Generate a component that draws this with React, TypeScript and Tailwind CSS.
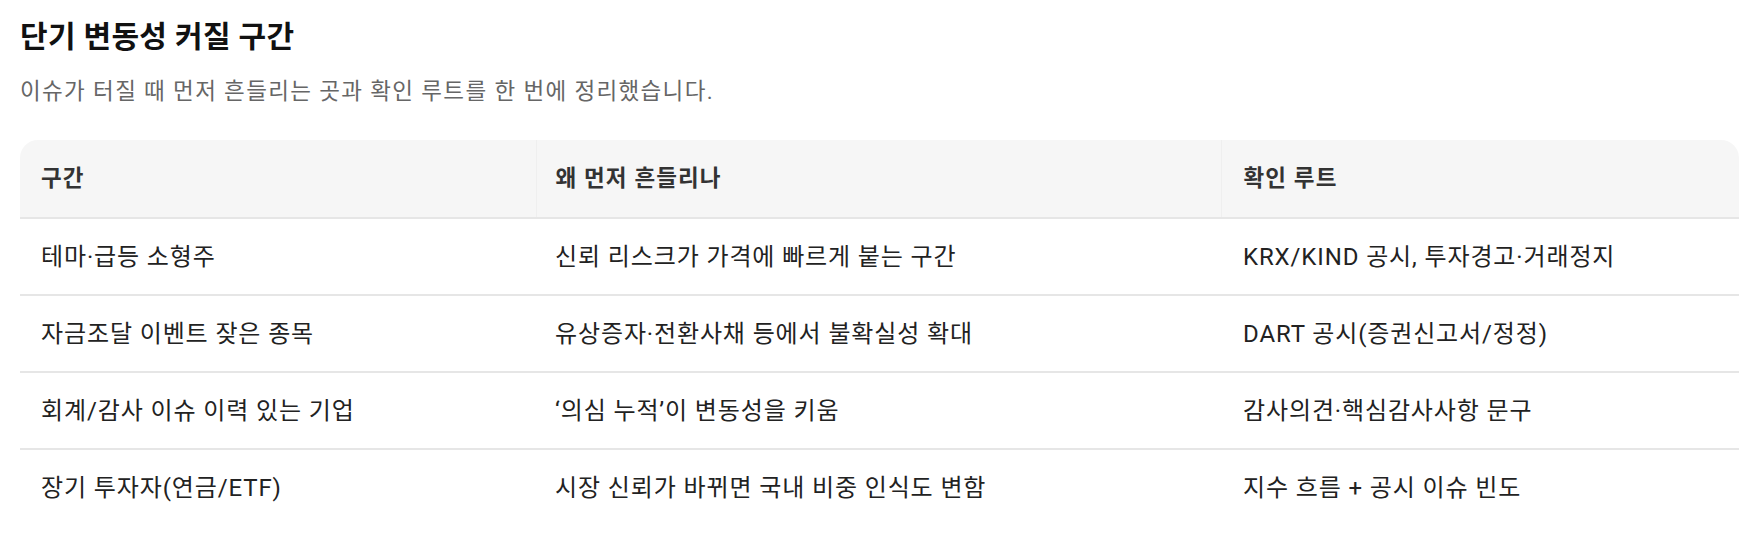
const rows = [
  ['테마·급등 소형주', '신뢰 리스크가 가격에 빠르게 붙는 구간', 'KRX/KIND 공시, 투자경고·거래정지'],
  ['자금조달 이벤트 잦은 종목', '유상증자·전환사채 등에서 불확실성 확대', 'DART 공시(증권신고서/정정)'],
  ['회계/감사 이슈 이력 있는 기업', '‘의심 누적’이 변동성을 키움', '감사의견·핵심감사사항 문구'],
  ['장기 투자자(연금/ETF)', '시장 신뢰가 바뀌면 국내 비중 인식도 변함', '지수 흐름 + 공시 이슈 빈도'],
];

export default function App() {
  return (
    <div
      className="w-[1739px] h-[544px] overflow-hidden bg-white pl-[20px] pt-[17px]"
      style={{ fontFamily: 'Roboto, "Noto Sans CJK KR", sans-serif' }}
    >
      <h1 className="text-[30px] leading-[39px] font-bold text-[#111] tracking-[0.01em]">
        단기 변동성 커질 구간
      </h1>
      <p className="mt-[18px] text-[22.5px] leading-[34px] text-[#666] tracking-[0.06em]">
        이슈가 터질 때 먼저 흔들리는 곳과 확인 루트를 한 번에 정리했습니다.
      </p>

      <div className="mt-[32px] w-[1719px] rounded-t-[18px] overflow-hidden">
        <table className="w-full border-collapse table-fixed">
          <colgroup>
            <col className="w-[516px]" />
            <col className="w-[685px]" />
            <col />
          </colgroup>
          <thead>
            <tr className="bg-[#f6f6f6] border-b-2 border-[#e6e6e6] tracking-[0.07em]">
              <th className="text-left font-semibold text-[22.5px] leading-[35px] text-[#333] py-[21px] px-[21px] border-r border-[#efefef]">
                구간
              </th>
              <th className="text-left font-semibold text-[22.5px] leading-[35px] text-[#333] py-[21px] px-[19px] border-r border-[#efefef]">
                왜 먼저 흔들리나
              </th>
              <th className="text-left font-semibold text-[22.5px] leading-[35px] text-[#333] py-[21px] px-[22px]">
                확인 루트
              </th>
            </tr>
          </thead>
          <tbody>
            {rows.map((r, i) => (
              <tr key={i} className={i < rows.length - 1 ? 'border-b-2 border-[#e6e6e6] tracking-[0.055em]' : 'tracking-[0.055em]'}>
                <td className="text-[24px] leading-[36px] text-[#222] pt-[20px] pb-[19px] px-[21px]">{r[0]}</td>
                <td className="text-[24px] leading-[36px] text-[#222] pt-[20px] pb-[19px] px-[19px]">{r[1]}</td>
                <td className="text-[24px] leading-[36px] text-[#222] pt-[20px] pb-[19px] px-[22px]">{r[2]}</td>
              </tr>
            ))}
          </tbody>
        </table>
      </div>
    </div>
  );
}
